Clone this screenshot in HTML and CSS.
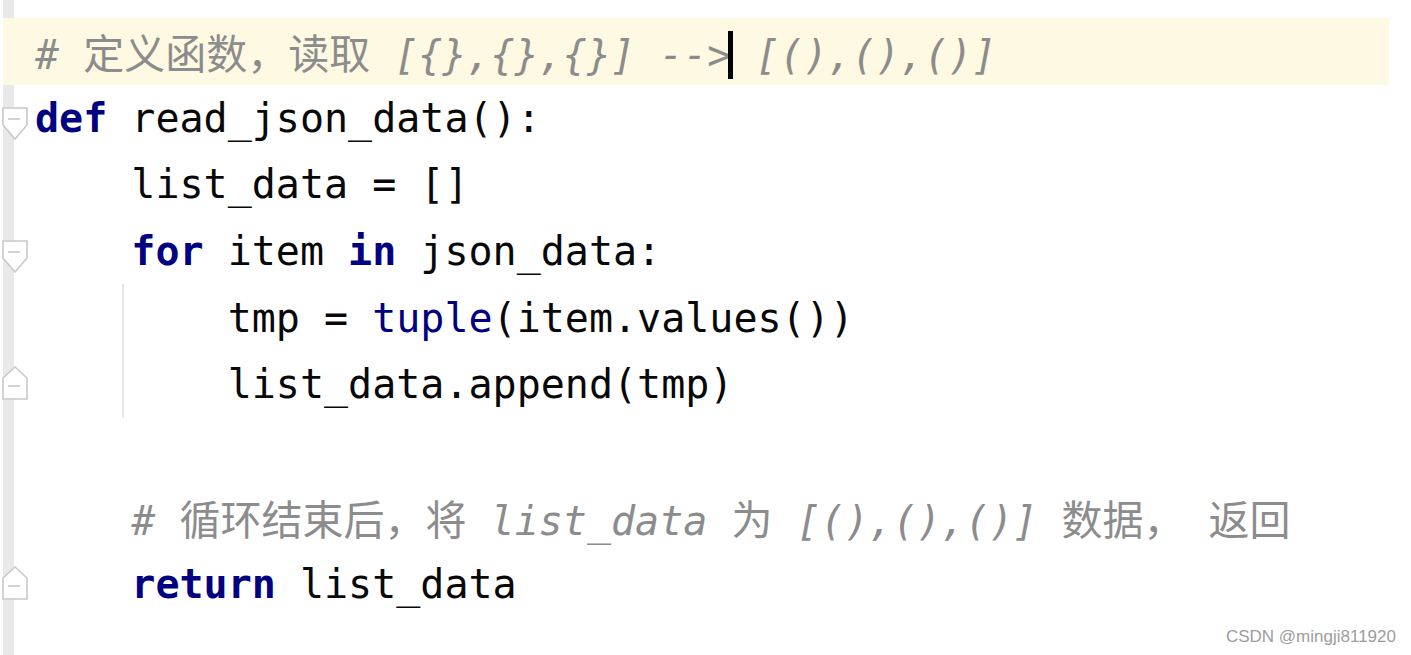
FILE: index.html
```html
<!DOCTYPE html>
<html lang="zh">
<head>
<meta charset="utf-8">
<title>read_json_data</title>
<link rel="stylesheet" href="styles.css">
</head>
<body>
<div class="editor">
  <div class="line current">
    <div class="fold"></div>
    <div class="code"><span class="cm">#&#32;<span class="cjk">定义函数，读取</span> [{},{},{}] --&gt;<span class="caret"></span> [(),(),()]</span></div>
  </div>
  <div class="line">
    <div class="fold"><svg class="marker down" width="26" height="34" viewBox="0 0 26 34"><path d="M1 1H25V18L13 32L1 18Z"/><line x1="6" y1="12" x2="18" y2="12"/></svg></div>
    <div class="code"><span class="kw">def</span> read_json_data():</div>
  </div>
  <div class="line">
    <div class="fold"></div>
    <div class="code">    list_data = []</div>
  </div>
  <div class="line">
    <div class="fold"><svg class="marker down" width="26" height="34" viewBox="0 0 26 34"><path d="M1 1H25V18L13 32L1 18Z"/><line x1="6" y1="12" x2="18" y2="12"/></svg></div>
    <div class="code">    <span class="kw">for</span> item <span class="kw">in</span> json_data:</div>
  </div>
  <div class="guide">
    <div class="line">
      <div class="fold"></div>
      <div class="code">        tmp = <span class="bi">tuple</span>(item.values())</div>
    </div>
    <div class="line">
      <div class="fold"><svg class="marker up" width="26" height="35" viewBox="0 0 26 35"><path d="M13 1L25 12V33H1V12Z"/><line x1="6" y1="20" x2="18" y2="20"/></svg></div>
      <div class="code">        list_data.append(tmp)</div>
    </div>
  </div>
  <div class="line">
    <div class="fold"></div>
    <div class="code"> </div>
  </div>
  <div class="line">
    <div class="fold"></div>
    <div class="code">    <span class="cm"># <span class="cjk">循环结束后，将</span> list_data <span class="cjk">为</span> [(),(),()] <span class="cjk">数据，</span> <span class="cjk">返回</span></span></div>
  </div>
  <div class="line">
    <div class="fold"><svg class="marker up" width="26" height="35" viewBox="0 0 26 35"><path d="M13 1L25 12V33H1V12Z"/><line x1="6" y1="20" x2="18" y2="20"/></svg></div>
    <div class="code">    <span class="kw">return</span> list_data</div>
  </div>
  <div class="watermark">CSDN @mingji811920</div>
</div>
</body>
</html>
```

FILE: styles.css
```css
* { box-sizing: border-box; }
html, body { margin: 0; padding: 0; background: #ffffff; }
.editor {
  position: relative;
  width: 1411px;
  height: 655px;
  padding-top: 18px;
  overflow: hidden;
  background: linear-gradient(to right, transparent 3px, #e9e9e9 3px, #e9e9e9 14px, transparent 14px);
  font-family: "DejaVu Sans Mono", "Noto Sans CJK SC", monospace;
  font-size: 40px;
  color: #080808;
}
.line {
  display: flex;
  align-items: center;
  margin-left: 3px;
  width: 1386px;
  height: 66.6px;
}
.line.current { background: #fef9e2; }
.fold {
  position: relative;
  width: 32px;
  height: 100%;
  flex: none;
}
.marker {
  position: absolute;
  left: -1px;
  fill: #ffffff;
  stroke: #c9c9c9;
  stroke-width: 1.6;
}
.marker.down { top: 22px; }
.marker.up { top: 15px; }
.code {
  white-space: pre;
  line-height: 66px;
  height: 66px;
}
.kw { color: #000080; font-weight: bold; }
.bi { color: #000080; }
.cm { color: #8c8c8c; font-style: italic; }
.cjk { font-style: normal; font-size: 41px; font-family: "Noto Sans CJK SC", sans-serif; }
.caret {
  display: inline-block;
  width: 5px;
  height: 48px;
  margin-left: -3px;
  margin-right: -2px;
  background: #000000;
  vertical-align: -10px;
}
.guide {
  background: linear-gradient(#e6e6e6, #e6e6e6) no-repeat 122px 0 / 2px 100%;
}
.watermark {
  position: absolute;
  right: 15px;
  bottom: 8px;
  font-family: "Liberation Sans", Arial, sans-serif;
  font-size: 17px;
  line-height: 20px;
  color: #9d9d9d;
}
```
